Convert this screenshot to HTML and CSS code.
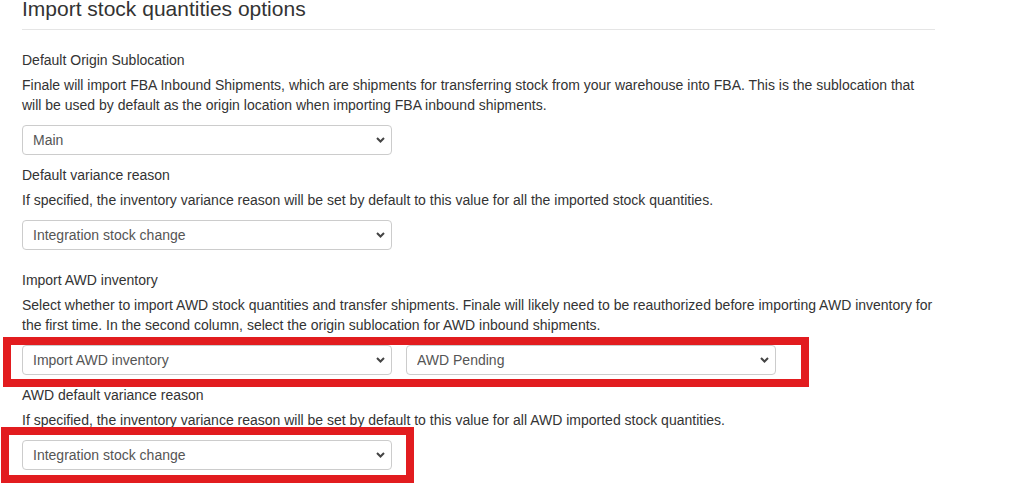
FILE: index.html
```html
<!DOCTYPE html>
<html>
<head>
<meta charset="utf-8">
<link rel="stylesheet" href="styles.css">
</head>
<body>
<div class="page">
  <h1 class="title">Import stock quantities options</h1>

  <div class="group">
    <label class="label">Default Origin Sublocation</label>
    <p class="help">Finale will import FBA Inbound Shipments, which are shipments for transferring stock from your warehouse into FBA. This is the sublocation that will be used by default as the origin location when importing FBA inbound shipments.</p>
    <div class="row">
      <div class="sel">
        <select class="control"><option>Main</option></select>
        <svg class="chev" width="9" height="6" viewBox="0 0 9 6"><path d="M1 1 L4.5 4.5 L8 1" fill="none" stroke="#444" stroke-width="2"/></svg>
      </div>
    </div>
  </div>

  <div class="group group-wide">
    <label class="label">Default variance reason</label>
    <p class="help">If specified, the inventory variance reason will be set by default to this value for all the imported stock quantities.</p>
    <div class="row">
      <div class="sel">
        <select class="control"><option>Integration stock change</option></select>
        <svg class="chev" width="9" height="6" viewBox="0 0 9 6"><path d="M1 1 L4.5 4.5 L8 1" fill="none" stroke="#444" stroke-width="2"/></svg>
      </div>
    </div>
  </div>

  <div class="group">
    <label class="label">Import AWD inventory</label>
    <p class="help">Select whether to import AWD stock quantities and transfer shipments. Finale will likely need to be reauthorized before importing AWD inventory for the first time. In the second column, select the origin sublocation for AWD inbound shipments.</p>
    <div class="row">
      <div class="sel">
        <select class="control"><option>Import AWD inventory</option></select>
        <svg class="chev" width="9" height="6" viewBox="0 0 9 6"><path d="M1 1 L4.5 4.5 L8 1" fill="none" stroke="#444" stroke-width="2"/></svg>
      </div>
      <div class="sel">
        <select class="control"><option>AWD Pending</option></select>
        <svg class="chev" width="9" height="6" viewBox="0 0 9 6"><path d="M1 1 L4.5 4.5 L8 1" fill="none" stroke="#444" stroke-width="2"/></svg>
      </div>
    </div>
  </div>

  <div class="group">
    <label class="label">AWD default variance reason</label>
    <p class="help">If specified, the inventory variance reason will be set by default to this value for all AWD imported stock quantities.</p>
    <div class="row">
      <div class="sel">
        <select class="control"><option>Integration stock change</option></select>
        <svg class="chev" width="9" height="6" viewBox="0 0 9 6"><path d="M1 1 L4.5 4.5 L8 1" fill="none" stroke="#444" stroke-width="2"/></svg>
      </div>
    </div>
  </div>
</div>

<div class="mark mark-awd"></div>
<div class="mark mark-reason"></div>
</body>
</html>
```

FILE: styles.css
```css
html, body {
  margin: 0;
  padding: 0;
  background: #fff;
}

body {
  font-family: "Liberation Sans", Arial, sans-serif;
  font-size: 14px;
  line-height: 20px;
  color: #333;
  position: relative;
  height: 497px;
  overflow: hidden;
}

.page {
  width: 913px;
  margin-left: 22px;
  display: flex;
  flex-direction: column;
}

.title {
  font-size: 21px;
  font-weight: normal;
  line-height: 18px;
  margin: 0 0 20px 0;
  padding-bottom: 11px;
  border-bottom: 1px solid #e5e5e5;
  color: #333;
}

.group {
  display: flex;
  flex-direction: column;
  margin-bottom: 10px;
}

.group-wide {
  margin-bottom: 20px;
}

.label {
  display: block;
  margin-bottom: 5px;
  font-weight: normal;
}

.help {
  margin: 0 0 10px 0;
}

.row {
  display: flex;
  gap: 14px;
}

.sel {
  position: relative;
  width: 370px;
  height: 30px;
}

.control {
  -webkit-appearance: none;
  appearance: none;
  width: 100%;
  height: 30px;
  box-sizing: border-box;
  border: 1px solid #ccc;
  border-radius: 4px;
  background: #fff;
  padding: 0 24px 0 10px;
  font-family: "Liberation Sans", Arial, sans-serif;
  font-size: 14px;
  color: #555;
  margin: 0;
  outline: none;
}

.chev {
  position: absolute;
  right: 7px;
  top: 12px;
  pointer-events: none;
}

.mark {
  position: absolute;
  border: 8px solid #e21c1f;
  box-sizing: border-box;
}

.mark-awd {
  left: 3px;
  top: 337px;
  width: 806px;
  height: 50px;
}

.mark-reason {
  left: 1px;
  top: 427px;
  width: 413px;
  height: 56px;
}
```
